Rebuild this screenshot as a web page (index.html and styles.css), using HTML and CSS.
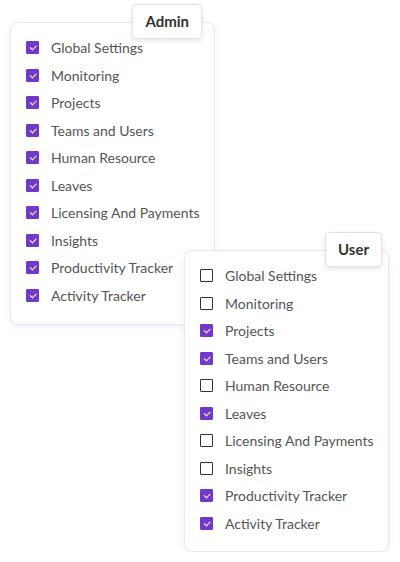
FILE: index.html
```html
<!DOCTYPE html>
<html lang="en">
<head>
    <meta charset="UTF-8">
    <meta name="viewport" content="width=device-width, initial-scale=1.0">
    <title>Permissions</title>
    <link rel="stylesheet" href="styles.css">
</head>
<body>
    <div class="page">
        <div class="card admin">
            <div class="role-tag">Admin</div>
            <ul class="perm-list">
                <li><span class="box on"></span>Global Settings</li>
                <li><span class="box on"></span>Monitoring</li>
                <li><span class="box on"></span>Projects</li>
                <li><span class="box on"></span>Teams and Users</li>
                <li><span class="box on"></span>Human Resource</li>
                <li><span class="box on"></span>Leaves</li>
                <li><span class="box on"></span>Licensing And Payments</li>
                <li><span class="box on"></span>Insights</li>
                <li><span class="box on"></span>Productivity Tracker</li>
                <li><span class="box on"></span>Activity Tracker</li>
            </ul>
        </div>

        <div class="card user">
            <div class="role-tag">User</div>
            <ul class="perm-list">
                <li><span class="box"></span>Global Settings</li>
                <li><span class="box"></span>Monitoring</li>
                <li><span class="box on"></span>Projects</li>
                <li><span class="box on"></span>Teams and Users</li>
                <li><span class="box"></span>Human Resource</li>
                <li><span class="box on"></span>Leaves</li>
                <li><span class="box"></span>Licensing And Payments</li>
                <li><span class="box"></span>Insights</li>
                <li><span class="box on"></span>Productivity Tracker</li>
                <li><span class="box on"></span>Activity Tracker</li>
            </ul>
        </div>
    </div>
</body>
</html>
```

FILE: styles.css
```css
body { margin: 0; background: #fff; font-family: Lato, "Noto Sans", sans-serif; }
.page { padding-top: 22px; }

.card {
    position: relative;
    width: 205px;
    box-sizing: border-box;
    background: #fff;
    border: 1px solid #ede3fb;
    border-radius: 8px;
    box-shadow: 0 2px 6px rgba(120, 70, 200, 0.10);
    padding: 11px 0 14px 15px;
}
.admin { margin-left: 10px; padding-bottom: 15px; }
.user { margin-left: 184px; margin-top: -75px; }

.role-tag {
    position: absolute;
    top: -19px;
    background: #fff;
    border: 1px solid #e4e0ea;
    border-radius: 4px;
    box-shadow: 0 2px 5px rgba(0, 0, 0, 0.10);
    font-weight: 700;
    font-size: 15px;
    color: #333;
    height: 33px;
    line-height: 33px;
    padding: 0 12px;
}
.admin .role-tag { right: 12px; }
.user .role-tag { right: 6px; }

.perm-list { list-style: none; margin: 0; padding: 0; }
.perm-list li {
    display: flex;
    align-items: center;
    height: 27.5px;
    font-size: 14px;
    color: #555;
}

.box {
    width: 13px;
    height: 13px;
    box-sizing: border-box;
    border: 1.5px solid #333;
    border-radius: 1px;
    margin-right: 12px;
    flex: none;
    position: relative;
}
.box.on { background: #7039c9; border-color: #7039c9; }
.box.on::after {
    content: "";
    position: absolute;
    left: 3px;
    top: 3px;
    width: 5px;
    height: 2.5px;
    border-left: 1.2px solid #fff;
    border-bottom: 1.2px solid #fff;
    transform: rotate(-45deg);
}
```
